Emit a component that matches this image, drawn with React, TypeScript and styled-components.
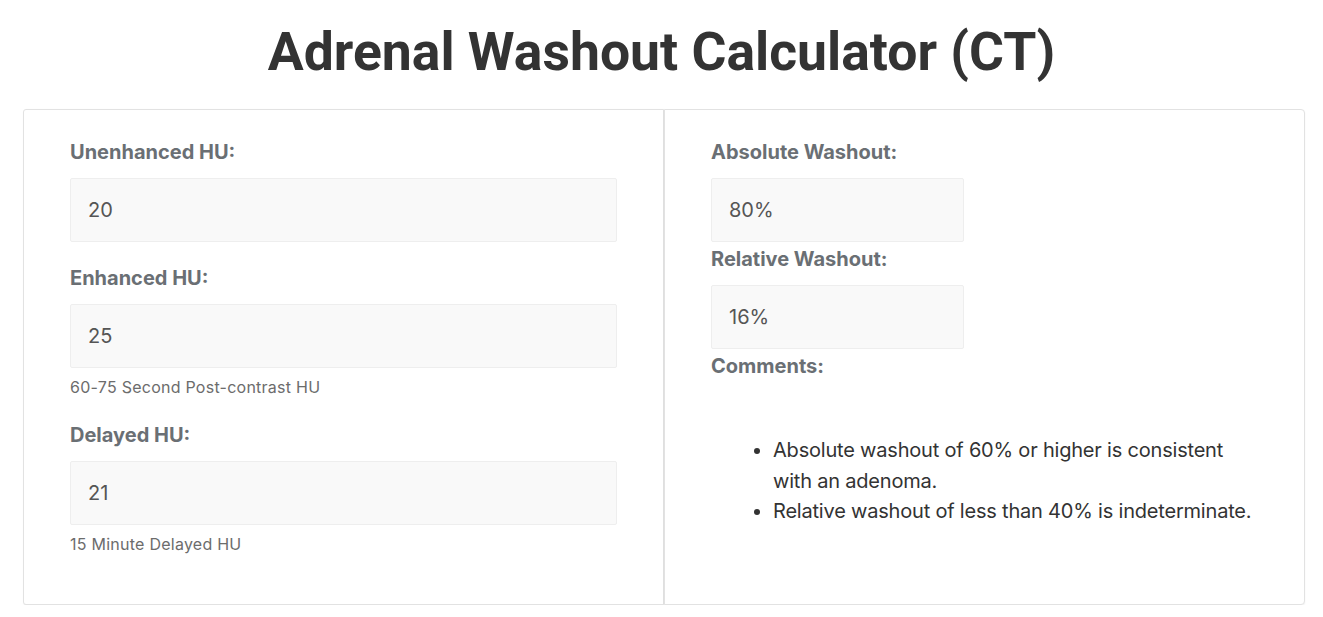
import React from "react";
import styled, { createGlobalStyle } from "styled-components";

const Global = createGlobalStyle`
  html, body { margin: 0; padding: 0; background: #ffffff; }
  body { font-family: Inter, Roboto, "Liberation Sans", Arial, sans-serif; }
  * { box-sizing: border-box; }
`;

const Page = styled.div`
  width: 1323px;
  padding: 21px 0 0 23px;
`;

const Title = styled.h1`
  margin: 0 0 26px 0;
  padding-right: 23px;
  font-family: Roboto, "Liberation Sans", Arial, sans-serif;
  font-size: 53.5px;
  line-height: 62px;
  font-weight: 700;
  color: #333333;
  text-align: center;
`;

const Columns = styled.div`
  display: grid;
  grid-template-columns: 641px 641px;
`;

const Card = styled.section<{ $side: "left" | "right" }>`
  border: 1px solid #e2e2e2;
  border-radius: ${(p) => (p.$side === "left" ? "3px 0 0 3px" : "0 4px 4px 0")};
  box-shadow: ${(p) => (p.$side === "left" ? "1px 1px 2px rgba(0, 0, 0, 0.1)" : "0 1px 2px rgba(0, 0, 0, 0.06)")};
  padding: 30px 46px 24px 46px;
  background: #fff;
`;

const Group = styled.div<{ $gap: number }>`
  margin-bottom: ${(p) => p.$gap}px;
`;

const Label = styled.label`
  display: block;
  font-size: 20px;
  line-height: 24px;
  font-weight: 700;
  color: #6a6f74;
  margin-bottom: 14px;
`;

const Field = styled.input<{ $narrow?: boolean }>`
  display: block;
  width: ${(p) => (p.$narrow ? "253px" : "100%")};
  height: 64px;
  margin: 0;
  padding: 0 17px;
  background: #f9f9f9;
  border: 1px solid #eeeeee;
  border-radius: 2px;
  font-family: Inter, Roboto, "Liberation Sans", Arial, sans-serif;
  font-size: 20px;
  color: #555555;
  outline: none;
`;

const Help = styled.div`
  margin: 7px 0 2px 0;
  font-size: 16px;
  line-height: 24px;
  letter-spacing: 0.25px;
  color: #6c6c6c;
`;

const CommentList = styled.ul`
  margin: 57px 0 0 0;
  padding-left: 62px;
  font-size: 20px;
  line-height: 30.5px;
  letter-spacing: -0.2px;
  color: #333333;
`;

const Item = styled.li`
  margin: 0;
`;

export default function App() {
  return (
    <>
      <Global />
      <Page>
        <Title>Adrenal Washout Calculator (CT)</Title>
        <Columns>
          <Card $side="left">
            <Group $gap={24}>
              <Label>Unenhanced HU:</Label>
              <Field defaultValue="20" />
            </Group>
            <Group $gap={24}>
              <Label>Enhanced HU:</Label>
              <Field defaultValue="25" />
              <Help>60-75 Second Post-contrast HU</Help>
            </Group>
            <Group $gap={24}>
              <Label>Delayed HU:</Label>
              <Field defaultValue="21" />
              <Help>15 Minute Delayed HU</Help>
            </Group>
          </Card>
          <Card $side="right">
            <Group $gap={5}>
              <Label>Absolute Washout:</Label>
              <Field $narrow readOnly value="80%" />
            </Group>
            <Group $gap={5}>
              <Label>Relative Washout:</Label>
              <Field $narrow readOnly value="16%" />
            </Group>
            <Label>Comments:</Label>
            <CommentList>
              <Item>Absolute washout of 60% or higher is consistent with an adenoma.</Item>
              <Item>Relative washout of less than 40% is indeterminate.</Item>
            </CommentList>
          </Card>
        </Columns>
      </Page>
    </>
  );
}
